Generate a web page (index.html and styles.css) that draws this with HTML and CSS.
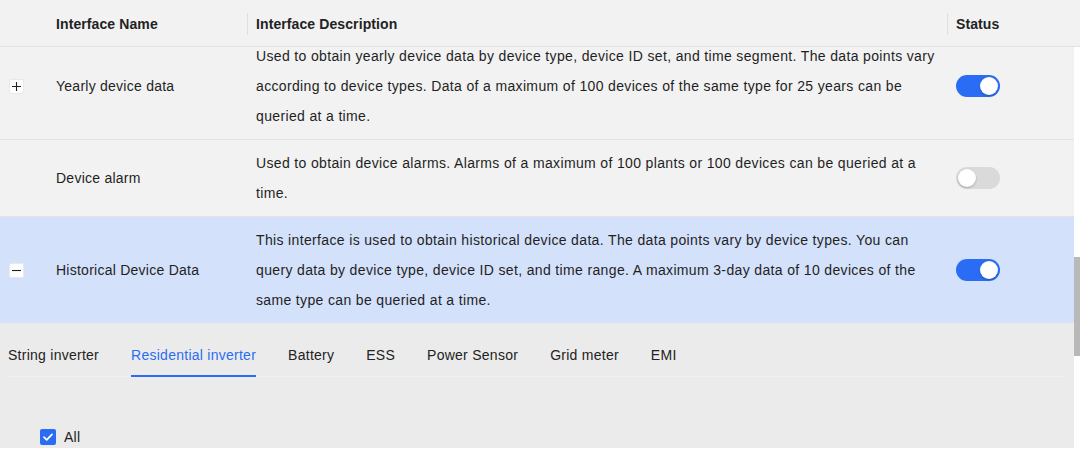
FILE: index.html
```html
<!DOCTYPE html>
<html lang="en">
<head>
<meta charset="utf-8">
<title>Interfaces</title>
<link rel="stylesheet" href="styles.css">
</head>
<body>
<div class="thead">
  <div class="th th-expand"></div>
  <div class="th"><span class="th-label th-first">Interface Name</span></div>
  <div class="th"><span class="th-label">Interface Description</span></div>
  <div class="th"><span class="th-label">Status</span></div>
</div>
<div class="layout">
  <div class="content">
    <div class="tbody">
      <div class="row row-first">
        <div class="td td-expand"><span class="expander"><svg viewBox="0 0 15 15" width="15" height="15"><path d="M3 7.5h9M7.5 3v9" stroke="#222" stroke-width="1.1" fill="none"/></svg></span></div>
        <div class="td td-name">Yearly device data</div>
        <div class="td td-desc">Used to obtain yearly device data by device type, device ID set, and time segment. The data points vary<br>according to device types. Data of a maximum of 100 devices of the same type for 25 years can be<br>queried at a time.</div>
        <div class="td td-status"><span class="switch on"><span class="knob"></span></span></div>
      </div>
      <div class="row">
        <div class="td td-expand"></div>
        <div class="td td-name">Device alarm</div>
        <div class="td td-desc">Used to obtain device alarms. Alarms of a maximum of 100 plants or 100 devices can be queried at a<br>time.</div>
        <div class="td td-status"><span class="switch off"><span class="knob"></span></span></div>
      </div>
      <div class="row row-active">
        <div class="td td-expand"><span class="expander"><svg viewBox="0 0 15 15" width="15" height="15"><path d="M3 7.5h9" stroke="#222" stroke-width="1.1" fill="none"/></svg></span></div>
        <div class="td td-name">Historical Device Data</div>
        <div class="td td-desc">This interface is used to obtain historical device data. The data points vary by device types. You can<br>query data by device type, device ID set, and time range. A maximum 3-day data of 10 devices of the<br>same type can be queried at a time.</div>
        <div class="td td-status"><span class="switch on"><span class="knob"></span></span></div>
      </div>
    </div>
    <div class="panel">
      <div class="tabs">
        <span class="tab">String inverter</span>
        <span class="tab tab-active">Residential inverter</span>
        <span class="tab">Battery</span>
        <span class="tab">ESS</span>
        <span class="tab">Power Sensor</span>
        <span class="tab">Grid meter</span>
        <span class="tab">EMI</span>
      </div>
      <label class="check-row">
        <span class="checkbox"><svg viewBox="0 0 16 16" width="16" height="16"><path d="M4 8.2l2.7 2.6L12 5.4" stroke="#fff" stroke-width="1.8" fill="none" stroke-linecap="round" stroke-linejoin="round"/></svg></span>
        <span class="check-label">All</span>
      </label>
    </div>
  </div>
  <div class="scroll-track"><div class="scroll-thumb"></div></div>
</div>
</body>
</html>
```
FILE: styles.css
```css
* { box-sizing: border-box; }
html, body { margin: 0; padding: 0; background: #fff; }
body {
  font-family: "Liberation Sans", Arial, sans-serif;
  font-size: 14px;
  letter-spacing: 0.25px;
  color: #1f1f1f;
  width: 1080px;
  height: 459px;
  overflow: hidden;
}
.thead {
  display: grid;
  grid-template-columns: 47px 200px 700px 1fr;
  height: 47px;
  padding-top: 2px;
  background: #f2f2f2;
  border-bottom: 1px solid #e2e2e2;
  position: relative;
  z-index: 2;
}
.th {
  display: flex;
  align-items: center;
  font-weight: bold;
  letter-spacing: 0.1px;
  color: #222;
}
.th-label {
  display: block;
  height: 22px;
  line-height: 22px;
  padding-left: 8px;
  border-left: 1px solid #e0e0e0;
}
.th-first { border-left-color: transparent; }
.layout {
  display: flex;
  height: 412px;
}
.content {
  width: 1074px;
  display: flex;
  flex-direction: column;
}
.tbody { overflow: hidden; }
.row {
  display: grid;
  grid-template-columns: 47px 200px 700px 127px;
  background: #f2f2f2;
  border-bottom: 1px solid #e3e3e3;
}
.row-first { margin-top: -14px; }
.row-active { background: #d4e1fb; border-bottom: none; }
.td {
  padding: 8px 9px;
  line-height: 30px;
  display: flex;
  align-items: center;
}
.td-desc { display: block; white-space: nowrap; letter-spacing: 0.35px; }
.expander {
  width: 15px;
  height: 15px;
  background: #fff;
  border: 1px solid #e9e9e9;
  border-radius: 2px;
  display: flex;
}
.expander svg { margin: -1px; }
.switch {
  width: 44px;
  height: 22px;
  border-radius: 11px;
  display: flex;
  align-items: center;
  padding: 2px;
}
.switch.on { background: #2a6df4; justify-content: flex-end; }
.switch.off { background: #dadada; justify-content: flex-start; }
.knob {
  width: 18px;
  height: 18px;
  border-radius: 50%;
  background: #fff;
  box-shadow: 0 1px 2px rgba(0,0,0,0.25);
}
.panel {
  background: #ebebeb;
  height: 125px;
}
.tabs {
  display: flex;
  gap: 32px;
  margin: 0 8px;
  border-bottom: 1px solid #f0f0f0;
}
.tab {
  padding: 21px 0 9px;
  line-height: 22px;
  border-bottom: 2px solid transparent;
  margin-bottom: -1px;
  letter-spacing: 0.26px;
  color: #222;
}
.tab-active {
  color: #2a6df4;
  border-bottom-color: #2a6df4;
}
.check-row {
  display: flex;
  align-items: center;
  gap: 8px;
  margin: 52px 0 0 40px;
  height: 16px;
}
.checkbox {
  width: 16px;
  height: 16px;
  border-radius: 2px;
  background: #2a6df4;
  display: flex;
}
.check-label { color: #222; line-height: 16px; }
.scroll-track {
  width: 6px;
  background: #fff;
  padding-top: 210px;
}
.scroll-thumb {
  height: 99px;
  background: #b9b9b9;
}
```
